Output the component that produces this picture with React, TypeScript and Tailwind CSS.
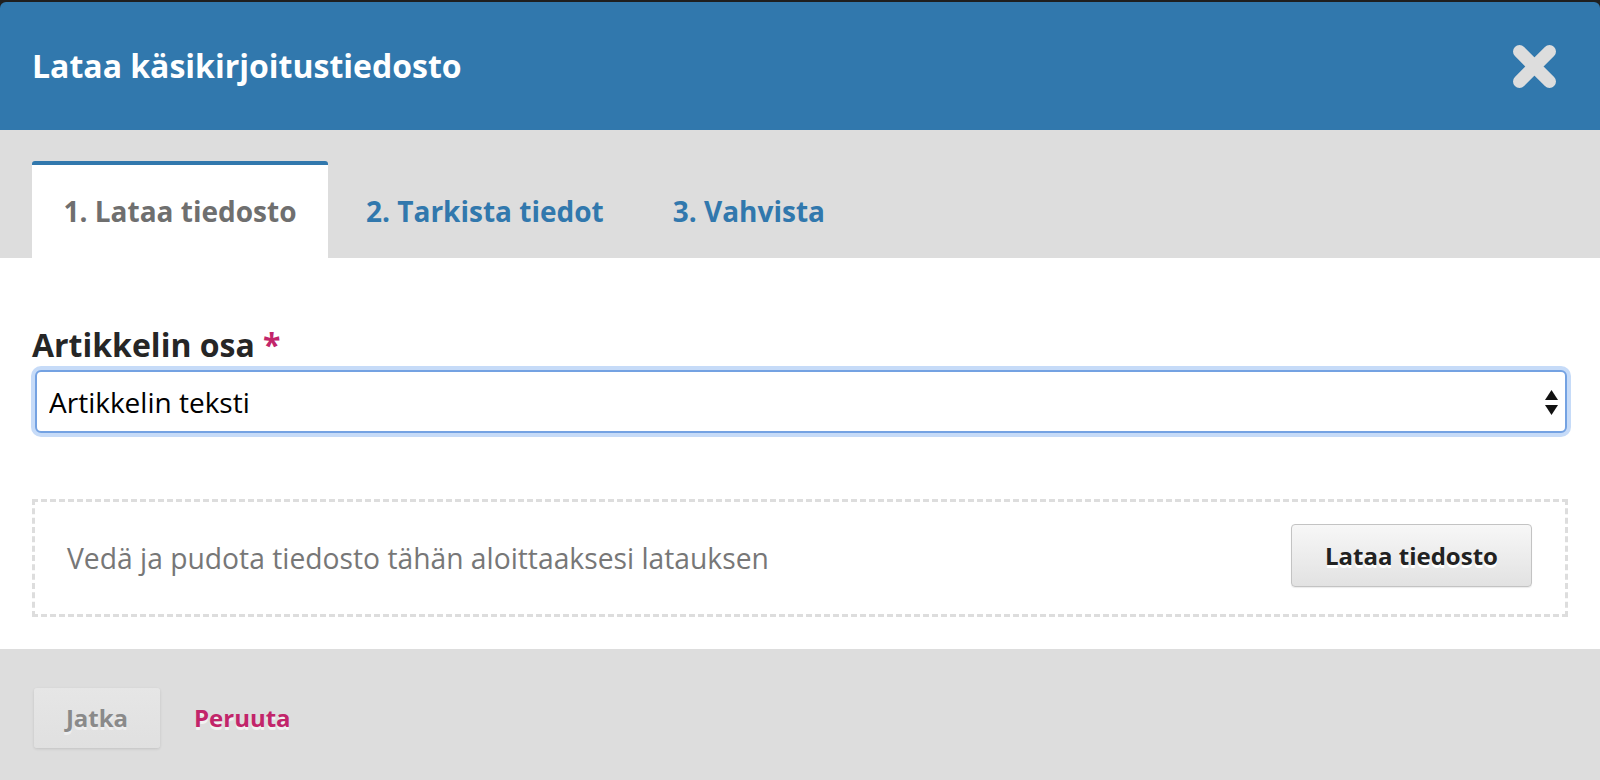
import React from "react";

function CloseIcon() {
  return (
    <svg width="43" height="43" viewBox="0 0 43 43" aria-hidden="true">
      <path
        d="M6.5 6.5 L36.5 36.5 M36.5 6.5 L6.5 36.5"
        stroke="#dddddd"
        strokeWidth="13"
        strokeLinecap="round"
        fill="none"
      />
    </svg>
  );
}

function SelectArrows() {
  return (
    <svg width="13" height="25" viewBox="0 0 13 25" aria-hidden="true">
      <path d="M6.5 0 L13 10 L0 10 Z" fill="#111" />
      <path d="M0 15 L13 15 L6.5 25 Z" fill="#111" />
    </svg>
  );
}

export default function App() {
  return (
    <div className="w-full h-[780px] bg-[#1f1f1f] pt-[2px] font-['Open_Sans',sans-serif] overflow-hidden">
      <div className="rounded-t-[6px] overflow-hidden h-[778px] flex flex-col">
        {/* Header */}
        <div className="h-[128px] bg-[#3178ad] flex items-center justify-between pl-[32px] pr-[44px]">
          <h1 className="text-[32px] font-bold text-white leading-none">Lataa käsikirjoitustiedosto</h1>
          <button className="block">
            <CloseIcon />
          </button>
        </div>

        {/* Tabs */}
        <div className="h-[128px] bg-[#dddddd] pt-[31px] pl-[32px] flex gap-[7px]">
          <div className="h-[97px] w-[296px] bg-white border-t-4 border-[#3178ad] rounded-t-[3px] flex items-center justify-center pb-[2px]">
            <span className="text-[28px] font-bold text-[#6f6f6f]">1. Lataa tiedosto</span>
          </div>
          <div className="h-[97px] px-[31px] flex items-center pt-[2px]">
            <span className="text-[28px] font-bold text-[#3178ad]">2. Tarkista tiedot</span>
          </div>
          <div className="h-[97px] px-[31px] flex items-center pt-[2px]">
            <span className="text-[28px] font-bold text-[#3178ad]">3. Vahvista</span>
          </div>
        </div>

        {/* Body */}
        <div className="bg-white px-[32px] pt-[68px] pb-[32px]">
          <label className="block text-[32px] leading-[38px] font-bold text-[#262626] mb-[6px]">
            Artikkelin osa <span className="text-[#c2256a]">*</span>
          </label>
          <div className="relative ml-[3px] mr-[1px]">
            <select
              defaultValue="text"
              className="appearance-none w-full h-[63px] rounded-[6px] border-2 border-[#74a2e2] bg-white pl-[12px] pr-[40px] text-[28px] text-black outline-none shadow-[0_0_0_4px_#c6dbf8] font-['Open_Sans',sans-serif]"
            >
              <option value="text">Artikkelin teksti</option>
            </select>
            <div className="pointer-events-none absolute right-[9px] top-[20px]">
              <SelectArrows />
            </div>
          </div>

          <div className="mt-[66px] h-[118px] border-[3px] border-dashed border-[#dddddd] flex items-center justify-between pl-[32px] pr-[33px]">
            <span className="text-[28.25px] text-[#777777]">
              Vedä ja pudota tiedosto tähän aloittaaksesi latauksen
            </span>
            <button className="h-[63px] w-[241px] -mt-[5px] rounded-[4px] border border-[#c3c3c3] bg-gradient-to-b from-[#f7f7f7] to-[#e2e2e2] text-[24px] font-bold text-[#222222] [text-shadow:0_3px_0_#ffffff] shadow-[0_1px_1px_rgba(0,0,0,0.08)]">
              Lataa tiedosto
            </button>
          </div>
        </div>

        {/* Footer */}
        <div className="flex-1 bg-[#dddddd] pt-[39px] pl-[34px] flex items-start gap-[34px]">
          <button
            disabled
            className="h-[60px] w-[126px] rounded-[3px] bg-gradient-to-b from-[#e6e6e6] to-[#e0e0e0] shadow-[0_1px_3px_rgba(0,0,0,0.12)] text-[24px] font-bold text-[#8a8a8a] [text-shadow:0_3px_0_#eeeeee]"
          >
            Jatka
          </button>
          <a className="h-[60px] flex items-center text-[24px] font-bold text-[#c2256a] [text-shadow:0_3px_0_#f2f2f2] cursor-pointer">
            Peruuta
          </a>
        </div>
      </div>
    </div>
  );
}
